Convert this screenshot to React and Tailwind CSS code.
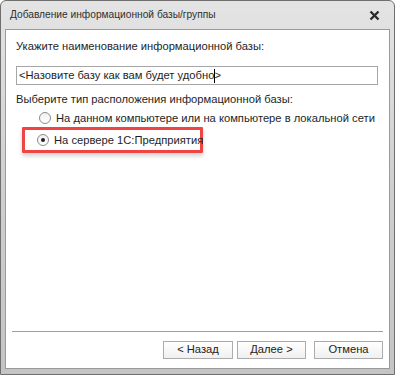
function Radio({ checked }) {
  return (
    <span className="w-[12px] h-[12px] rounded-full border border-[#8b8b8b] bg-gradient-to-b from-[#f0f0f0] to-white flex items-center justify-center shrink-0">
      {checked && <span className="w-[4px] h-[4px] rounded-full bg-[#222]" />}
    </span>
  );
}

function Button({ children, className = "w-[70px]" }) {
  return (
    <button className={`h-[18px] border border-[#acacac] bg-gradient-to-b from-white to-[#f0f0f0] text-[11.2px] leading-none text-[#222] flex items-center justify-center ${className}`}>
      {children}
    </button>
  );
}

export default function App() {
  return (
    <div
      className="w-[395px] h-[375px] flex flex-col border border-[#6f6f6f] rounded-t-[6px] bg-gradient-to-b from-[#e4e4e4] via-[#cfcfcf] to-[#c4c4c4] text-[#1e1e1e] whitespace-nowrap"
      style={{ fontFamily: '"Liberation Sans", Arial, sans-serif' }}
    >
      <div className="h-[28px] shrink-0 flex items-center justify-between pl-[9px] pr-[14px]">
        <span className="text-[10.2px] text-[#303030]">Добавление информационной базы/группы</span>
        <svg width="11" height="11" viewBox="0 0 11 11">
          <path d="M1.5 1.5 L9.5 9.5 M9.5 1.5 L1.5 9.5" stroke="#2a2a2a" strokeWidth="2.4" />
        </svg>
      </div>
      <div className="flex-1 mx-[4px] mb-[5px] bg-white border border-[#9a9a9a] flex flex-col">
        <div className="flex-1 flex flex-col pl-[10px] pr-[11px] pt-[8px] text-[11.2px]">
          <span className="leading-[16px]">Укажите наименование информационной базы:</span>
          <div className="mt-[12px] h-[19px] border border-[#a6a6a6] flex items-center px-[2px] leading-none">
            <span>&lt;Назовите базу как вам будет удобно</span>
            <span className="w-px h-[14px] bg-black -mr-px" />
            <span>&gt;</span>
          </div>
          <span className="mt-[6px] leading-[16px]">Выберите тип расположения информационной базы:</span>
          <div className="mt-[3px] ml-[23px] flex items-center gap-[5px] leading-[16px]">
            <Radio />
            <span>На данном компьютере или на компьютере в локальной сети</span>
          </div>
          <div className="mt-[1px] ml-[6px] w-[181px] border-[3px] border-[#ef4444] rounded-[1px] shadow-[0_3px_4px_rgba(0,0,0,0.18)] flex items-center gap-[5px] pl-[12px] py-[2px] leading-[16px]">
            <Radio checked />
            <span>На сервере 1С:Предприятия</span>
          </div>
        </div>
        <div className="mx-[6px] border-t border-[#a0a0a0]" />
        <div className="h-[36px] flex items-center justify-end pr-[6px]">
          <Button>&lt; Назад</Button>
          <Button className="w-[69px] ml-[4px]">Далее &gt;</Button>
          <Button className="w-[69px] ml-[8px]">Отмена</Button>
        </div>
      </div>
    </div>
  );
}
